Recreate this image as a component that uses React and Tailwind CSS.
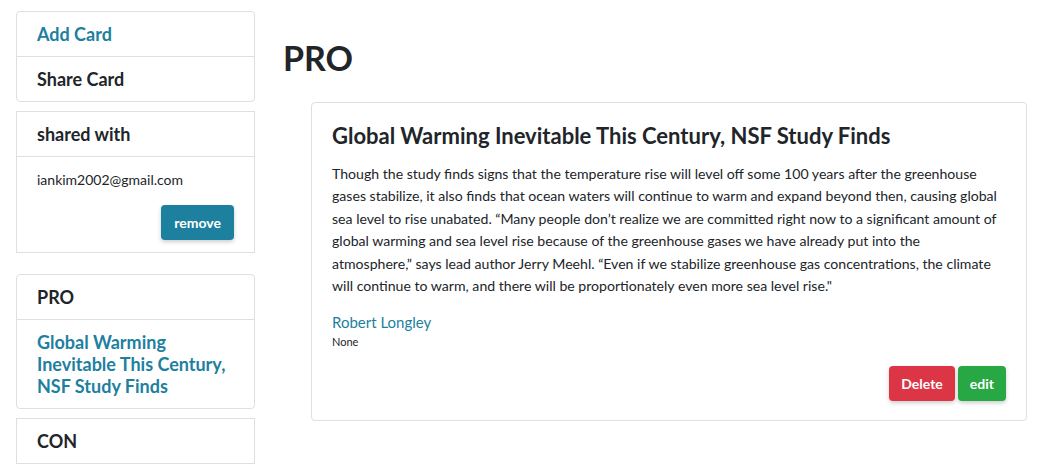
import React from "react";

const FONT = { fontFamily: "Lato, 'Open Sans', sans-serif" };

const bodyLines = [
  "Though the study finds signs that the temperature rise will level off some 100 years after the greenhouse",
  "gases stabilize, it also finds that ocean waters will continue to warm and expand beyond then, causing global",
  "sea level to rise unabated. \u201cMany people don\u2019t realize we are committed right now to a significant amount of",
  "global warming and sea level rise because of the greenhouse gases we have already put into the",
  "atmosphere,\u201d says lead author Jerry Meehl. \u201cEven if we stabilize greenhouse gas concentrations, the climate",
  "will continue to warm, and there will be proportionately even more sea level rise.\"",
];

function Item({ children, className = "" }) {
  return (
    <div className={`px-5 py-[11px] text-[18px] leading-[22px] font-bold ${className}`}>
      {children}
    </div>
  );
}

export default function App() {
  return (
    <div className="flex bg-white text-[#212529] min-h-[473px]" style={FONT}>
      {/* sidebar */}
      <div className="w-[239px] ml-4 mt-[11px] flex flex-col shrink-0">
        <div className="border border-[#dfdfdf] rounded divide-y divide-[#dfdfdf]">
          <Item className="text-[#1d809f]">Add Card</Item>
          <Item>Share Card</Item>
        </div>

        <div className="border border-[#dfdfdf] mt-[9px]">
          <Item className="border-b border-[#dfdfdf]">shared with</Item>
          <div className="px-5 pt-[14px] pb-[12px]">
            <div className="text-[14px] leading-[17px]">iankim2002@gmail.com</div>
            <div className="flex justify-end mt-[17px]">
              <button className="bg-[#1d809f] text-white font-bold text-[14px] h-[35px] px-[13px] rounded shadow-[0_2px_4px_rgba(0,0,0,0.2)]">
                remove
              </button>
            </div>
          </div>
        </div>

        <div className="mt-[21px]">
          <div className="border border-[#dfdfdf] rounded-t">
            <Item>PRO</Item>
          </div>
          <div className="border border-[#dfdfdf] rounded-b -mt-px">
            <Item className="text-[#1d809f]">
              Global Warming Inevitable This Century, NSF Study Finds
            </Item>
          </div>
        </div>

        <div className="border border-[#dfdfdf] mt-[9px]">
          <Item>CON</Item>
        </div>
      </div>

      {/* main */}
      <div className="ml-[28px] mt-[36px] flex-1 pr-[34px]">
        <h1 className="text-[34px] leading-[43px] font-bold">PRO</h1>
        <div className="ml-[28px] mt-[23px] border border-[#dfdfdf] rounded px-5 pt-[19px] pb-[19px]">
          <h2 className="text-[22px] leading-[27px] font-bold">
            Global Warming Inevitable This Century, NSF Study Finds
          </h2>
          <p className="mt-[14px] text-[14.1px] leading-[22.4px] whitespace-nowrap">
            {bodyLines.map((line, i) => (
              <React.Fragment key={i}>
                {line}
                {i < bodyLines.length - 1 && <br />}
              </React.Fragment>
            ))}
          </p>
          <div className="mt-[16px] text-[15px] leading-[18px] text-[#1d809f]">
            Robert Longley
          </div>
          <div className="mt-[3px] text-[11px] leading-[16px]">None</div>
          <div className="flex justify-end gap-[3px] mt-[16px]">
            <button className="bg-[#dc3545] text-white font-bold text-[14px] h-[35px] px-3 rounded shadow-[0_2px_4px_rgba(0,0,0,0.2)]">
              Delete
            </button>
            <button className="bg-[#28a745] text-white font-bold text-[14px] h-[35px] px-3 rounded shadow-[0_2px_4px_rgba(0,0,0,0.2)]">
              edit
            </button>
          </div>
        </div>
      </div>
    </div>
  );
}
